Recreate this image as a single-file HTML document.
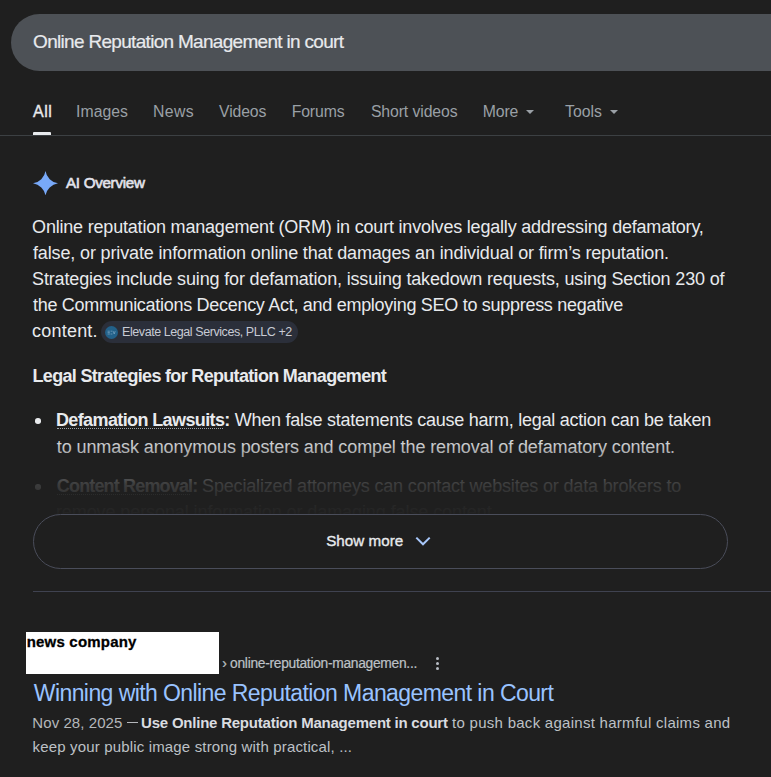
<!DOCTYPE html>
<html><head><meta charset="utf-8"><style>
html,body{margin:0;padding:0;background:#1f1f1f;width:771px;height:777px;overflow:hidden;position:relative}
.t{position:absolute;white-space:nowrap;line-height:1;font-family:"Liberation Sans", sans-serif}
</style></head><body>
<div style="position:absolute;left:11px;top:14px;width:820px;height:57px;border-radius:28.5px;background:#4d5156"></div>
<div style="position:absolute;left:33px;top:132px;width:18px;height:3px;background:#e8eaed;border-radius:1px 1px 0 0"></div>
<div style="position:absolute;left:0;top:135px;width:771px;height:1px;background:#3c4043"></div>
<div style="position:absolute;left:526px;top:110px;width:0;height:0;border-left:4px solid transparent;border-right:4px solid transparent;border-top:4px solid #9aa0a6"></div>
<div style="position:absolute;left:609.5px;top:110px;width:0;height:0;border-left:4px solid transparent;border-right:4px solid transparent;border-top:4px solid #9aa0a6"></div>
<svg style="position:absolute;left:33.2px;top:170.8px" width="25" height="24.6" viewBox="0 0 24 24" preserveAspectRatio="none"><path d="M12 24A14.3 14.3 0 0 0 0 12 14.3 14.3 0 0 0 12 0a14.3 14.3 0 0 0 12 12 14.3 14.3 0 0 0-12 12" fill="#78a9f9"/></svg>
<div style="position:absolute;left:101px;top:321px;width:197px;height:22px;border-radius:11px;background:#2b2f3a"></div>
<svg style="position:absolute;left:105px;top:325.5px" width="13" height="13" viewBox="0 0 13 13"><circle cx="6.5" cy="6.5" r="6.5" fill="#22618a"/><path d="M2.6 5.2h2.2M2.6 6.6h2.2M2.6 8h2.2M5.6 5.2h1.8M5.6 8h1.8M8.2 5.2l1 2.8 1-2.8" stroke="#7fa8c4" stroke-width="0.7" fill="none"/></svg>
<div style="position:absolute;left:35px;top:418px;width:5.6px;height:5.6px;border-radius:50%;background:#e8eaed"></div>
<div style="position:absolute;left:35px;top:484px;width:5.6px;height:5.6px;border-radius:50%;background:#e8eaed"></div>
<div style="position:absolute;left:57px;top:428px;width:166px;height:0;border-top:1px dotted #9aa0a6"></div>
<div style="position:absolute;left:57px;top:494px;width:133px;height:0;border-top:1px dotted #9aa0a6"></div>
<div id="q" class="t" style="left:33.10px;top:32.22px;font-size:19px;font-weight:400;color:#e8eaed;letter-spacing:-0.694px;-webkit-text-stroke:0.2px #e8eaed;">Online Reputation Management in court</div>
<div id="tab0" class="t" style="left:33.00px;top:103.66px;font-size:16px;font-weight:400;color:#e8eaed;letter-spacing:0.500px;-webkit-text-stroke:0.35px #e8eaed;">All</div>
<div id="tab1" class="t" style="left:76.10px;top:103.83px;font-size:15.8px;font-weight:400;color:#9aa0a6;letter-spacing:0.000px;">Images</div>
<div id="tab2" class="t" style="left:153.10px;top:103.83px;font-size:15.8px;font-weight:400;color:#9aa0a6;letter-spacing:0.333px;">News</div>
<div id="tab3" class="t" style="left:219.05px;top:103.83px;font-size:15.8px;font-weight:400;color:#9aa0a6;letter-spacing:-0.140px;">Videos</div>
<div id="tab4" class="t" style="left:291.73px;top:103.83px;font-size:15.8px;font-weight:400;color:#9aa0a6;letter-spacing:-0.140px;">Forums</div>
<div id="tab5" class="t" style="left:370.89px;top:103.83px;font-size:15.8px;font-weight:400;color:#9aa0a6;letter-spacing:-0.100px;">Short videos</div>
<div id="tab6" class="t" style="left:482.68px;top:103.83px;font-size:15.8px;font-weight:400;color:#9aa0a6;letter-spacing:-0.100px;">More</div>
<div id="tab7" class="t" style="left:565.00px;top:103.83px;font-size:15.8px;font-weight:400;color:#9aa0a6;letter-spacing:0.025px;">Tools</div>
<div id="aio" class="t" style="left:66.00px;top:175.13px;font-size:15.2px;font-weight:400;color:#e3e3ec;letter-spacing:-0.300px;-webkit-text-stroke:0.6px #e3e3ec;">AI Overview</div>
<div id="p1" class="t" style="left:32.10px;top:218.06px;font-size:18px;font-weight:400;color:#e8eaed;letter-spacing:-0.198px;">Online reputation management (ORM) in court involves legally addressing defamatory,</div>
<div id="p2" class="t" style="left:33.00px;top:244.06px;font-size:18px;font-weight:400;color:#e8eaed;letter-spacing:-0.143px;">false, or private information online that damages an individual or firm’s reputation.</div>
<div id="p3" class="t" style="left:32.10px;top:270.06px;font-size:18px;font-weight:400;color:#e8eaed;letter-spacing:-0.161px;">Strategies include suing for defamation, issuing takedown requests, using Section 230 of</div>
<div id="p4" class="t" style="left:33.00px;top:296.06px;font-size:18px;font-weight:400;color:#e8eaed;letter-spacing:-0.290px;">the Communications Decency Act, and employing SEO to suppress negative</div>
<div id="p5" class="t" style="left:32.10px;top:322.06px;font-size:18px;font-weight:400;color:#e8eaed;letter-spacing:0.200px;">content.</div>
<div id="chip" class="t" style="left:122.10px;top:325.62px;font-size:12.5px;font-weight:400;color:#c8cbd4;letter-spacing:-0.433px;">Elevate Legal Services, PLLC +2</div>
<div id="h" class="t" style="left:32.52px;top:366.56px;font-size:18px;font-weight:700;color:#e8eaed;letter-spacing:-0.678px;">Legal Strategies for Reputation Management</div>
<div id="b1a" class="t" style="left:55.94px;top:410.56px;font-size:18px;font-weight:700;color:#e8eaed;letter-spacing:-0.611px;">Defamation Lawsuits:</div>
<div id="b1b" class="t" style="left:234.79px;top:410.56px;font-size:18px;font-weight:400;color:#e8eaed;letter-spacing:-0.253px;">When false statements cause harm, legal action can be taken</div>
<div id="b1c" class="t" style="left:56.84px;top:438.46px;font-size:18px;font-weight:400;color:#e8eaed;letter-spacing:-0.113px;">to unmask anonymous posters and compel the removal of defamatory content.</div>
<div id="b2a" class="t" style="left:56.84px;top:476.56px;font-size:18px;font-weight:700;color:#e8eaed;letter-spacing:-0.840px;">Content Removal:</div>
<div id="b2b" class="t" style="left:202.05px;top:476.56px;font-size:18px;font-weight:400;color:#e8eaed;letter-spacing:-0.168px;">Specialized attorneys can contact websites or data brokers to</div>
<div id="b2c" class="t" style="left:55.94px;top:503.26px;font-size:18px;font-weight:400;color:#e8eaed;letter-spacing:-0.087px;">remove personal information or damaging false content.</div>
<div style="position:absolute;left:0;top:436px;width:771px;height:84px;background:linear-gradient(to bottom, rgba(31,31,31,0) 0%, rgba(31,31,31,0.85) 57%, rgba(31,31,31,0.96) 83%, #1f1f1f 100%)"></div>
<div style="position:absolute;left:33px;top:514px;width:695px;height:55px;box-sizing:border-box;border:1px solid #4a4d5a;border-radius:28px;background:#1f1f1f"></div>
<svg style="position:absolute;left:415px;top:536px" width="16" height="10" viewBox="0 0 16 10"><path d="M1.3 1.6 L8 8.3 L14.7 1.6" fill="none" stroke="#a8c7fa" stroke-width="2"/></svg>
<div style="position:absolute;left:33px;top:591px;width:738px;height:1px;background:#3f4250"></div>
<div style="position:absolute;left:26px;top:632px;width:193px;height:42px;background:#ffffff"></div>
<div style="position:absolute;left:435.95px;top:657.1px;width:3.3px;height:3.3px;border-radius:50%;background:#b8bcc4"></div><div style="position:absolute;left:435.95px;top:662.15px;width:3.3px;height:3.3px;border-radius:50%;background:#b8bcc4"></div><div style="position:absolute;left:435.95px;top:667.15px;width:3.3px;height:3.3px;border-radius:50%;background:#b8bcc4"></div>
<div style="position:absolute;left:127.3px;top:722.1px;width:10.6px;height:1.1px;background:#b4b7bb"></div>
<div id="sm" class="t" style="left:326.21px;top:533.13px;font-size:15.2px;font-weight:400;color:#e8eaed;letter-spacing:0.037px;-webkit-text-stroke:0.35px #e8eaed;">Show more</div>
<div id="nc" class="t" style="left:26.68px;top:634.40px;font-size:15px;font-weight:700;color:#000000;letter-spacing:0.200px;-webkit-text-stroke:0.3px #000;">news company</div>
<div id="bc" class="t" style="left:222.26px;top:657.32px;font-size:13.8px;font-weight:400;color:#bdc1c6;letter-spacing:-0.290px;-webkit-text-stroke:0.2px #bdc1c6;">› online-reputation-managemen...</div>
<div id="title" class="t" style="left:33.79px;top:681.53px;font-size:23px;font-weight:400;color:#99c3ff;letter-spacing:-0.580px;">Winning with Online Reputation Management in Court</div>
<div id="s1a" class="t" style="left:32.34px;top:714.50px;font-size:15px;font-weight:400;color:#b4b7bb;letter-spacing:0.072px;">Nov 28, 2025</div>
<div id="s1b" class="t" style="left:141.10px;top:714.50px;font-size:15px;font-weight:700;color:#dadce0;letter-spacing:-0.225px;">Use Online Reputation Management in court</div>
<div id="s1c" class="t" style="left:452.05px;top:714.50px;font-size:15px;font-weight:400;color:#bdc1c6;letter-spacing:0.276px;">to push back against harmful claims and</div>
<div id="s2" class="t" style="left:32.60px;top:739.10px;font-size:15px;font-weight:400;color:#bdc1c6;letter-spacing:0.158px;">keep your public image strong with practical, ...</div>
</body></html>
